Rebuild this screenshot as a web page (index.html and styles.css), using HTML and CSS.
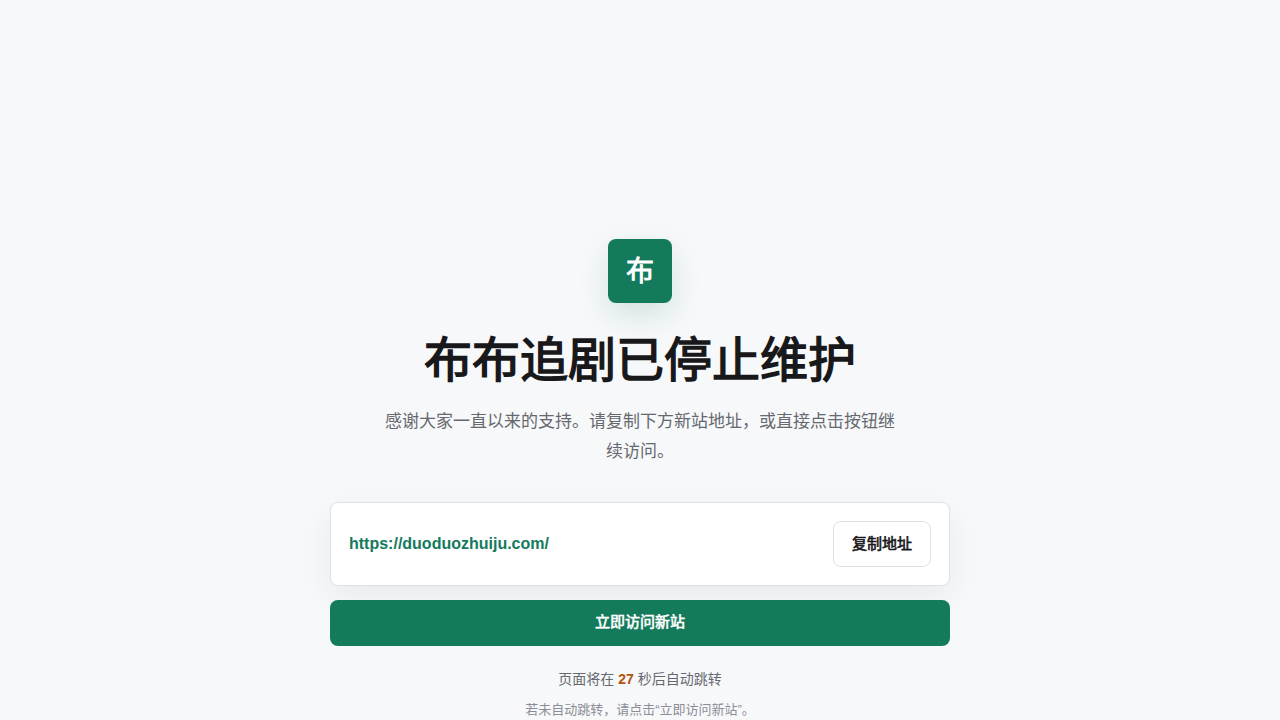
FILE: index.html
```html
<!DOCTYPE html>
<html lang="zh-CN">
<head>
    <meta charset="UTF-8">
    <meta name="viewport" content="width=device-width, initial-scale=1.0">
    <title>布布追剧已停止维护</title>
    <link rel="stylesheet" href="styles.css">
</head>
<body>
    <main class="page">
        <div class="logo">布</div>
        <h1>布布追剧已停止维护</h1>
        <p class="intro">感谢大家一直以来的支持。请复制下方新站地址，或直接点击按钮继续访问。</p>

        <div class="card">
            <a class="url" href="https://duoduozhuiju.com/">https://duoduozhuiju.com/</a>
            <button class="copy" id="copyBtn" type="button">复制地址</button>
        </div>
        <a class="visit" href="https://duoduozhuiju.com/">立即访问新站</a>

        <p class="countdown">页面将在 <strong>27</strong> 秒后自动跳转</p>
        <p class="hint">若未自动跳转，请点击“立即访问新站”。</p>
    </main>

    <script>
        // Copy the new address
        const copyBtn = document.getElementById('copyBtn');
        copyBtn.addEventListener('click', () => {
            navigator.clipboard.writeText('https://duoduozhuiju.com/');
        });
    </script>
</body>
</html>
```
FILE: styles.css
```css
* {
    box-sizing: border-box;
}
body {
    margin: 0;
    height: 100vh;
    background: #f7f8fa;
    color: #18181b;
    font-family: "Liberation Sans", "Noto Sans CJK SC", sans-serif;
    overflow: hidden;
}
.page {
    width: 620px;
    margin: 0 auto;
    padding-top: 239px;
    text-align: center;
}
.logo {
    width: 64px;
    height: 64px;
    margin: 0 auto 29px;
    border-radius: 8px;
    background: #147a5c;
    color: #fff;
    font-size: 28px;
    line-height: 65px;
    -webkit-text-stroke: 0.8px;
    box-shadow: 0 12px 30px rgba(20, 122, 92, 0.16);
}
h1 {
    margin: 0;
    font-size: 48px;
    line-height: 57px;
    font-weight: 400;
    -webkit-text-stroke: 1.5px;
}
.intro {
    width: 520px;
    margin: 18px auto 35px;
    color: #66686f;
    font-size: 17px;
    line-height: 30px;
}
.card {
    display: flex;
    align-items: center;
    justify-content: space-between;
    gap: 12px;
    padding: 18px;
    border: 1px solid #dde1e7;
    border-radius: 8px;
    background: #fff;
    box-shadow: 0 12px 36px rgba(24, 24, 27, 0.06);
}
.url {
    color: #147a5c;
    font-size: 16px;
    font-weight: 700;
    text-decoration: none;
}
.copy,
.visit {
    height: 46px;
    border-radius: 8px;
    font-family: inherit;
    font-size: 15px;
    font-weight: 400;
    -webkit-text-stroke: 0.6px;
    cursor: pointer;
}
.copy {
    padding: 0 18px 4px;
    border: 1px solid #dde1e7;
    background: #fff;
    color: #18181b;
}
.visit {
    display: block;
    margin-top: 14px;
    background: #147a5c;
    color: #fff;
    line-height: 44px;
    text-decoration: none;
}
.countdown {
    margin: 22px 0 0;
    color: #66686f;
    font-size: 14px;
    line-height: 22px;
}
.countdown strong {
    color: #b45309;
}
.hint {
    margin: 10px 0 0;
    color: #8b8e97;
    font-size: 13px;
    line-height: 20px;
}
```
